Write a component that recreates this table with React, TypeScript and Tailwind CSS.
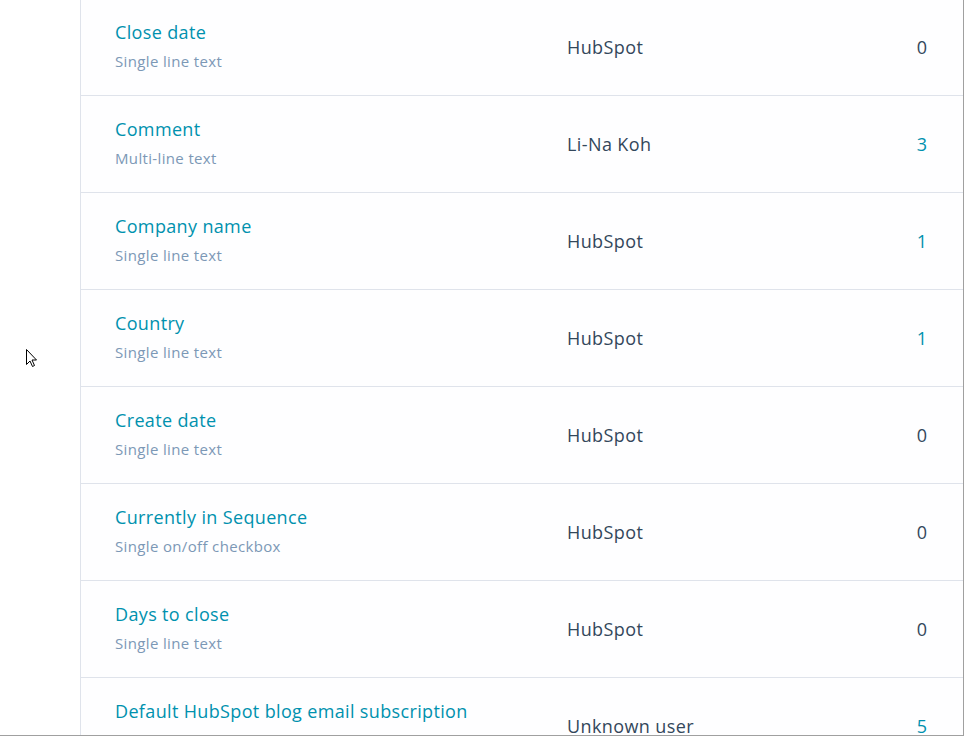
import React from "react";

type Row = { title: string; sub: string; owner: string; count: number };

const rows: Row[] = [
  { title: "Close date", sub: "Single line text", owner: "HubSpot", count: 0 },
  { title: "Comment", sub: "Multi-line text", owner: "Li-Na Koh", count: 3 },
  { title: "Company name", sub: "Single line text", owner: "HubSpot", count: 1 },
  { title: "Country", sub: "Single line text", owner: "HubSpot", count: 1 },
  { title: "Create date", sub: "Single line text", owner: "HubSpot", count: 0 },
  { title: "Currently in Sequence", sub: "Single on/off checkbox", owner: "HubSpot", count: 0 },
  { title: "Days to close", sub: "Single line text", owner: "HubSpot", count: 0 },
  { title: "Default HubSpot blog email subscription", sub: "Multiple checkboxes", owner: "Unknown user", count: 5 },
];

function Cursor() {
  return (
    <svg width="12" height="19" viewBox="0 0 12 19" className="absolute left-[26px] top-[349px]">
      <path d="M0.5 0.5 L0.5 15.5 L4 12 L6.5 17.5 L8.5 16.5 L6 11 L10.5 11 Z" fill="#fff" stroke="#000" strokeWidth="1" strokeLinejoin="miter" />
    </svg>
  );
}

export default function App() {
  return (
    <div
      className="relative w-[964px] h-[736px] overflow-hidden bg-white border-r border-b border-[#a0a0a0] flex"
      style={{ fontFamily: "'Open Sans', Lato, sans-serif" }}
    >
      <div className="w-[80px] shrink-0 bg-white" />
      <div className="flex-1 border-l border-[#dfe3eb] bg-[#fefeff] -mt-px">
        {rows.map((r, i) => (
          <div key={i} className="h-[97px] border-b border-[#dfe3eb] flex items-center pl-[34px] pr-[36px]">
            <div className="w-[452px] flex flex-col -mt-[3px]">
              <span className="text-[18px] leading-[24px] tracking-[0.35px] text-[#0091ae]">{r.title}</span>
              <span className="text-[15px] leading-[20px] tracking-[0.35px] mt-[7px] text-[#7c98b6]">{r.sub}</span>
            </div>
            <div className="flex-1 text-[18px] leading-[24px] tracking-[0.4px] text-[#33475b]">{r.owner}</div>
            <div className={"text-[18px] leading-[24px] " + (r.count > 0 ? "text-[#0091ae]" : "text-[#33475b]")}>{r.count}</div>
          </div>
        ))}
      </div>
      <Cursor />
    </div>
  );
}
